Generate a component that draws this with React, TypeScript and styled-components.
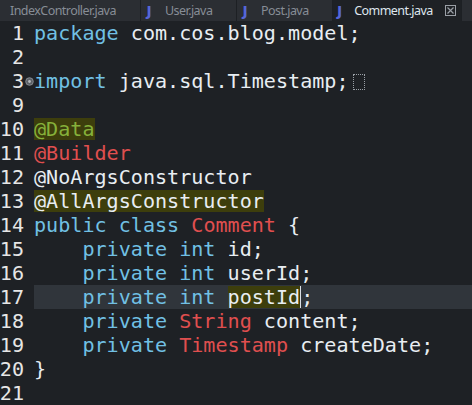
import React from "react";
import styled, { createGlobalStyle, css } from "styled-components";

const Global = createGlobalStyle`
  html, body { margin: 0; padding: 0; background: #1e2125; }
  #root { width: 472px; height: 405px; overflow: hidden; }
`;

const Window = styled.div`
  width: 472px;
  height: 405px;
  background: #1e2125;
  overflow: hidden;
  display: flex;
  flex-direction: column;
`;

const TabBar = styled.div`
  height: 21px;
  flex: none;
  display: flex;
  background: #2b2e33;
`;

const Tab = styled.div<{ $w: number; $active?: boolean; $icon?: boolean }>`
  width: ${(p) => p.$w}px;
  flex: none;
  box-sizing: border-box;
  display: flex;
  align-items: center;
  gap: 12px;
  padding-left: ${(p) => (p.$icon ? 4 : 10)}px;
  border-right: 1px solid #1d2024;
  font-family: "Noto Sans", "Open Sans", sans-serif;
  font-size: 12.5px;
  letter-spacing: -0.55px;
  color: ${(p) => (p.$active ? "#dfe6ee" : "#878d96")};
  background: ${(p) => (p.$active ? "#1e2125" : "#2b2e33")};
  white-space: nowrap;
  overflow: hidden;
`;

const JIcon = styled.span`
  font-family: "DejaVu Sans", sans-serif;
  font-weight: bold;
  font-size: 14px;
  letter-spacing: 0;
  color: #5666d8;
  width: 8px;
  display: inline-flex;
  justify-content: center;
`;

const Close = styled.svg`
  margin-left: auto;
  margin-right: 10px;
  flex: none;
`;

const Editor = styled.div`
  flex: 1;
  font-family: "DejaVu Sans Mono", "Liberation Mono", monospace;
  font-size: 20.1px;
  color: #e8edf2;
`;

const Row = styled.div`
  height: 24px;
  display: grid;
  grid-template-columns: 24px 10px 1fr;
  align-items: stretch;
`;

const Num = styled.div`
  display: flex;
  justify-content: flex-end;
  align-items: center;
  color: #e6e6e6;
  white-space: pre;
`;

const Fold = styled.div`
  display: flex;
  align-items: center;
  justify-content: center;
`;

const Code = styled.div<{ $current?: boolean }>`
  display: flex;
  align-items: center;
  white-space: pre;
  ${(p) =>
    p.$current &&
    css`
      background: #30353b;
    `}
`;

type Kind = "kw" | "plain" | "red" | "green";

const Tok = styled.span<{ $k: Kind; $mark?: boolean }>`
  display: inline-flex;
  align-items: center;
  height: 24px;
  color: ${(p) =>
    p.$k === "kw"
      ? "#71c0e4"
      : p.$k === "red"
      ? "#e04f4f"
      : p.$k === "green"
      ? "#86b13a"
      : "#e8edf2"};
  ${(p) =>
    p.$mark &&
    css`
      background: #3d3e0c;
      height: 22px;
    `}
`;

const Caret = styled.span`
  display: inline-block;
  width: 1px;
  height: 22px;
  background: #d8dde3;
`;

const Ellipsis = styled.span`
  display: inline-block;
  width: 10px;
  height: 14px;
  margin-left: 4px;
  border: 1px dotted #9aa0a6;
  position: relative;
  top: 1px;
`;

type T = { t: string; k?: Kind; mark?: boolean; caret?: boolean };
type Line = { n: number; toks: T[]; fold?: boolean; current?: boolean; ell?: boolean };

const lines: Line[] = [
  { n: 1, toks: [{ t: "package", k: "kw" }, { t: " com.cos.blog.model;" }] },
  { n: 2, toks: [] },
  { n: 3, fold: true, ell: true, toks: [{ t: "import", k: "kw" }, { t: " java.sql.Timestamp;" }] },
  { n: 9, toks: [] },
  { n: 10, toks: [{ t: "@Data", k: "green", mark: true }] },
  { n: 11, toks: [{ t: "@Builder", k: "red" }] },
  { n: 12, toks: [{ t: "@NoArgsConstructor" }] },
  { n: 13, toks: [{ t: "@AllArgsConstructor", mark: true }] },
  { n: 14, toks: [{ t: "public class ", k: "kw" }, { t: "Comment", k: "red" }, { t: " {" }] },
  { n: 15, toks: [{ t: "    private int ", k: "kw" }, { t: "id;" }] },
  { n: 16, toks: [{ t: "    private int ", k: "kw" }, { t: "userId;" }] },
  {
    n: 17,
    current: true,
    toks: [{ t: "    private int ", k: "kw" }, { t: "postId", mark: true, caret: true }, { t: ";" }],
  },
  { n: 18, toks: [{ t: "    private ", k: "kw" }, { t: "String", k: "red" }, { t: " content;" }] },
  { n: 19, toks: [{ t: "    private ", k: "kw" }, { t: "Timestamp", k: "red" }, { t: " createDate;" }] },
  { n: 20, toks: [{ t: "}" }] },
  { n: 21, toks: [] },
];

const tabs = [
  { name: "IndexController.java", w: 141, icon: false },
  { name: "User.java", w: 96, icon: true },
  { name: "Post.java", w: 96, icon: true },
  { name: "Comment.java", w: 129, icon: true, active: true },
];

export default function App() {
  return (
    <>
      <Global />
      <Window>
        <TabBar>
          {tabs.map((tb) => (
            <Tab key={tb.name} $w={tb.w} $active={tb.active} $icon={tb.icon}>
              {tb.icon && <JIcon>J</JIcon>}
              <span>{tb.name}</span>
              {tb.active && (
                <Close width="11" height="11" viewBox="0 0 11 11">
                  <rect x="0.5" y="0.5" width="10" height="10" fill="none" stroke="#9a9fa6" strokeWidth="1" />
                  <path d="M2.5 2.5 L8.5 8.5 M8.5 2.5 L2.5 8.5" stroke="#9a9fa6" strokeWidth="1.2" />
                </Close>
              )}
            </Tab>
          ))}
        </TabBar>
        <Editor>
          {lines.map((l) => (
            <Row key={l.n}>
              <Num>{l.n}</Num>
              <Fold>
                {l.fold && (
                  <svg width="9" height="9" viewBox="0 0 9 9">
                    <circle cx="4.5" cy="4.5" r="3.8" fill="#5d6167" stroke="#8b9096" strokeWidth="0.9" />
                    <circle cx="4.5" cy="4.5" r="1.4" fill="#b5b9be" />
                  </svg>
                )}
              </Fold>
              <Code $current={l.current}>
                {l.toks.map((tk, i) => (
                  <React.Fragment key={i}>
                    <Tok $k={tk.k ?? "plain"} $mark={tk.mark}>
                      {tk.t}
                    </Tok>
                    {tk.caret && <Caret />}
                  </React.Fragment>
                ))}
                {l.ell && <Ellipsis />}
              </Code>
            </Row>
          ))}
        </Editor>
      </Window>
    </>
  );
}
